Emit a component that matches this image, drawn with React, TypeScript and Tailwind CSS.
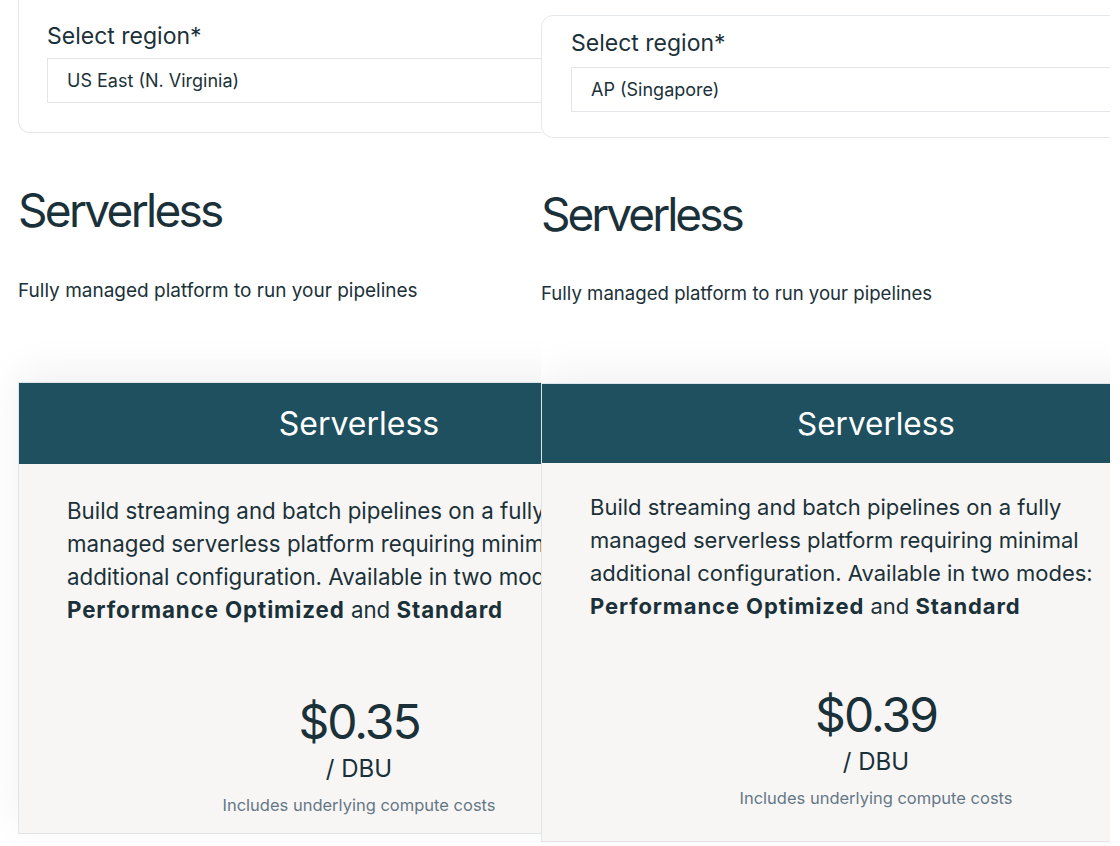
import React from 'react'

type PanelProps = {
  region: string
  price: string
  variant: 'left' | 'right'
}

function Panel({ region, price, variant }: PanelProps) {
  const left = variant === 'left'
  return (
    <div className={left ? 'w-[541px] shrink-0 overflow-hidden pl-[18px]' : 'w-[569px] shrink-0 overflow-hidden'}>
      <div className={left ? 'w-[682px]' : 'w-[670px]'}>
        {/* region picker card */}
        <div
          className={
            left
              ? 'h-[133px] border border-t-0 border-[#e4e8eb] rounded-b-[12px] px-[28px] pt-[21px] bg-white'
              : 'mt-[15px] h-[123px] border border-[#e4e8eb] rounded-[12px] px-[29px] pt-[12px] bg-white'
          }
        >
          <div className="text-[23px] leading-[30px] text-[#1b3139]">Select region*</div>
          <div
            className={
              left
                ? 'mt-[7px] h-[45px] border border-[#e3e5e8] flex items-center px-[19px] text-[18px] text-[#1b3139] bg-white'
                : 'mt-[9px] h-[45px] border border-[#e3e5e8] flex items-center px-[19px] text-[18px] text-[#1b3139] bg-white'
            }
          >
            {region}
          </div>
        </div>

        <h2
          className={
            left
              ? 'mt-[49px] text-[46px] leading-[56px] text-[#1b3139] font-normal tracking-[-2.7px]'
              : 'mt-[48px] text-[46px] leading-[56px] text-[#1b3139] font-normal tracking-[-3px]'
          }
        >
          Serverless
        </h2>
        <p
          className={
            left
              ? 'mt-[40px] text-[19px] leading-[26px] text-[#1b3139]'
              : 'mt-[38px] text-[18.6px] leading-[26px] text-[#1b3139]'
          }
        >
          Fully managed platform to run your pipelines
        </p>

        {/* pricing card */}
        <div
          className={
            left
              ? 'mt-[78px] border border-[#dfe4e9] shadow-[0_-10px_40px_rgba(0,0,0,0.06)]'
              : 'mt-[77px] border border-[#dfe4e9] shadow-[0_-10px_40px_rgba(0,0,0,0.06)]'
          }
        >
          <div
            className={
              left
                ? 'h-[81px] bg-[#1e5060] flex items-center justify-center text-white text-[32px]'
                : 'h-[79px] bg-[#1e5060] flex items-center justify-center text-white text-[31.5px]'
            }
          >
            Serverless
          </div>
          <div className={left ? 'h-[369px] bg-[#f7f6f4] px-[48px] pt-[30px]' : 'h-[378px] bg-[#f7f6f4] px-[48px] pt-[28px]'}>
            <p
              className={
                left
                  ? 'text-[22.3px] leading-[33px] text-[#1b3139] whitespace-nowrap'
                  : 'text-[22px] leading-[33px] text-[#1b3139] whitespace-nowrap'
              }
            >
              Build streaming and batch pipelines on a fully
              <br />
              managed serverless platform requiring minimal
              <br />
              additional configuration. Available in two modes:
              <br />
              <b className="font-bold tracking-[0.9px]">Performance Optimized</b> and{' '}
              <b className="font-bold tracking-[0.9px]">Standard</b>
            </p>
            <div className={left ? 'mt-[68px] flex flex-col items-center text-[#1b3139]' : 'mt-[64px] flex flex-col items-center text-[#1b3139]'}>
              <div className="text-[48px] leading-[56px] tracking-[-2px]">{price}</div>
              <div className="mt-[3px] text-[24px] leading-[32px]">/ DBU</div>
              <div className="mt-[9px] text-[16.5px] leading-[22px] text-[#657887]">Includes underlying compute costs</div>
            </div>
          </div>
        </div>
      </div>
    </div>
  )
}

export default function App() {
  return (
    <div className="w-[1120px] h-[846px] overflow-hidden bg-white flex" style={{ fontFamily: 'Inter, "Noto Sans", sans-serif' }}>
      <Panel variant="left" region="US East (N. Virginia)" price="$0.35" />
      <Panel variant="right" region="AP (Singapore)" price="$0.39" />
    </div>
  )
}
